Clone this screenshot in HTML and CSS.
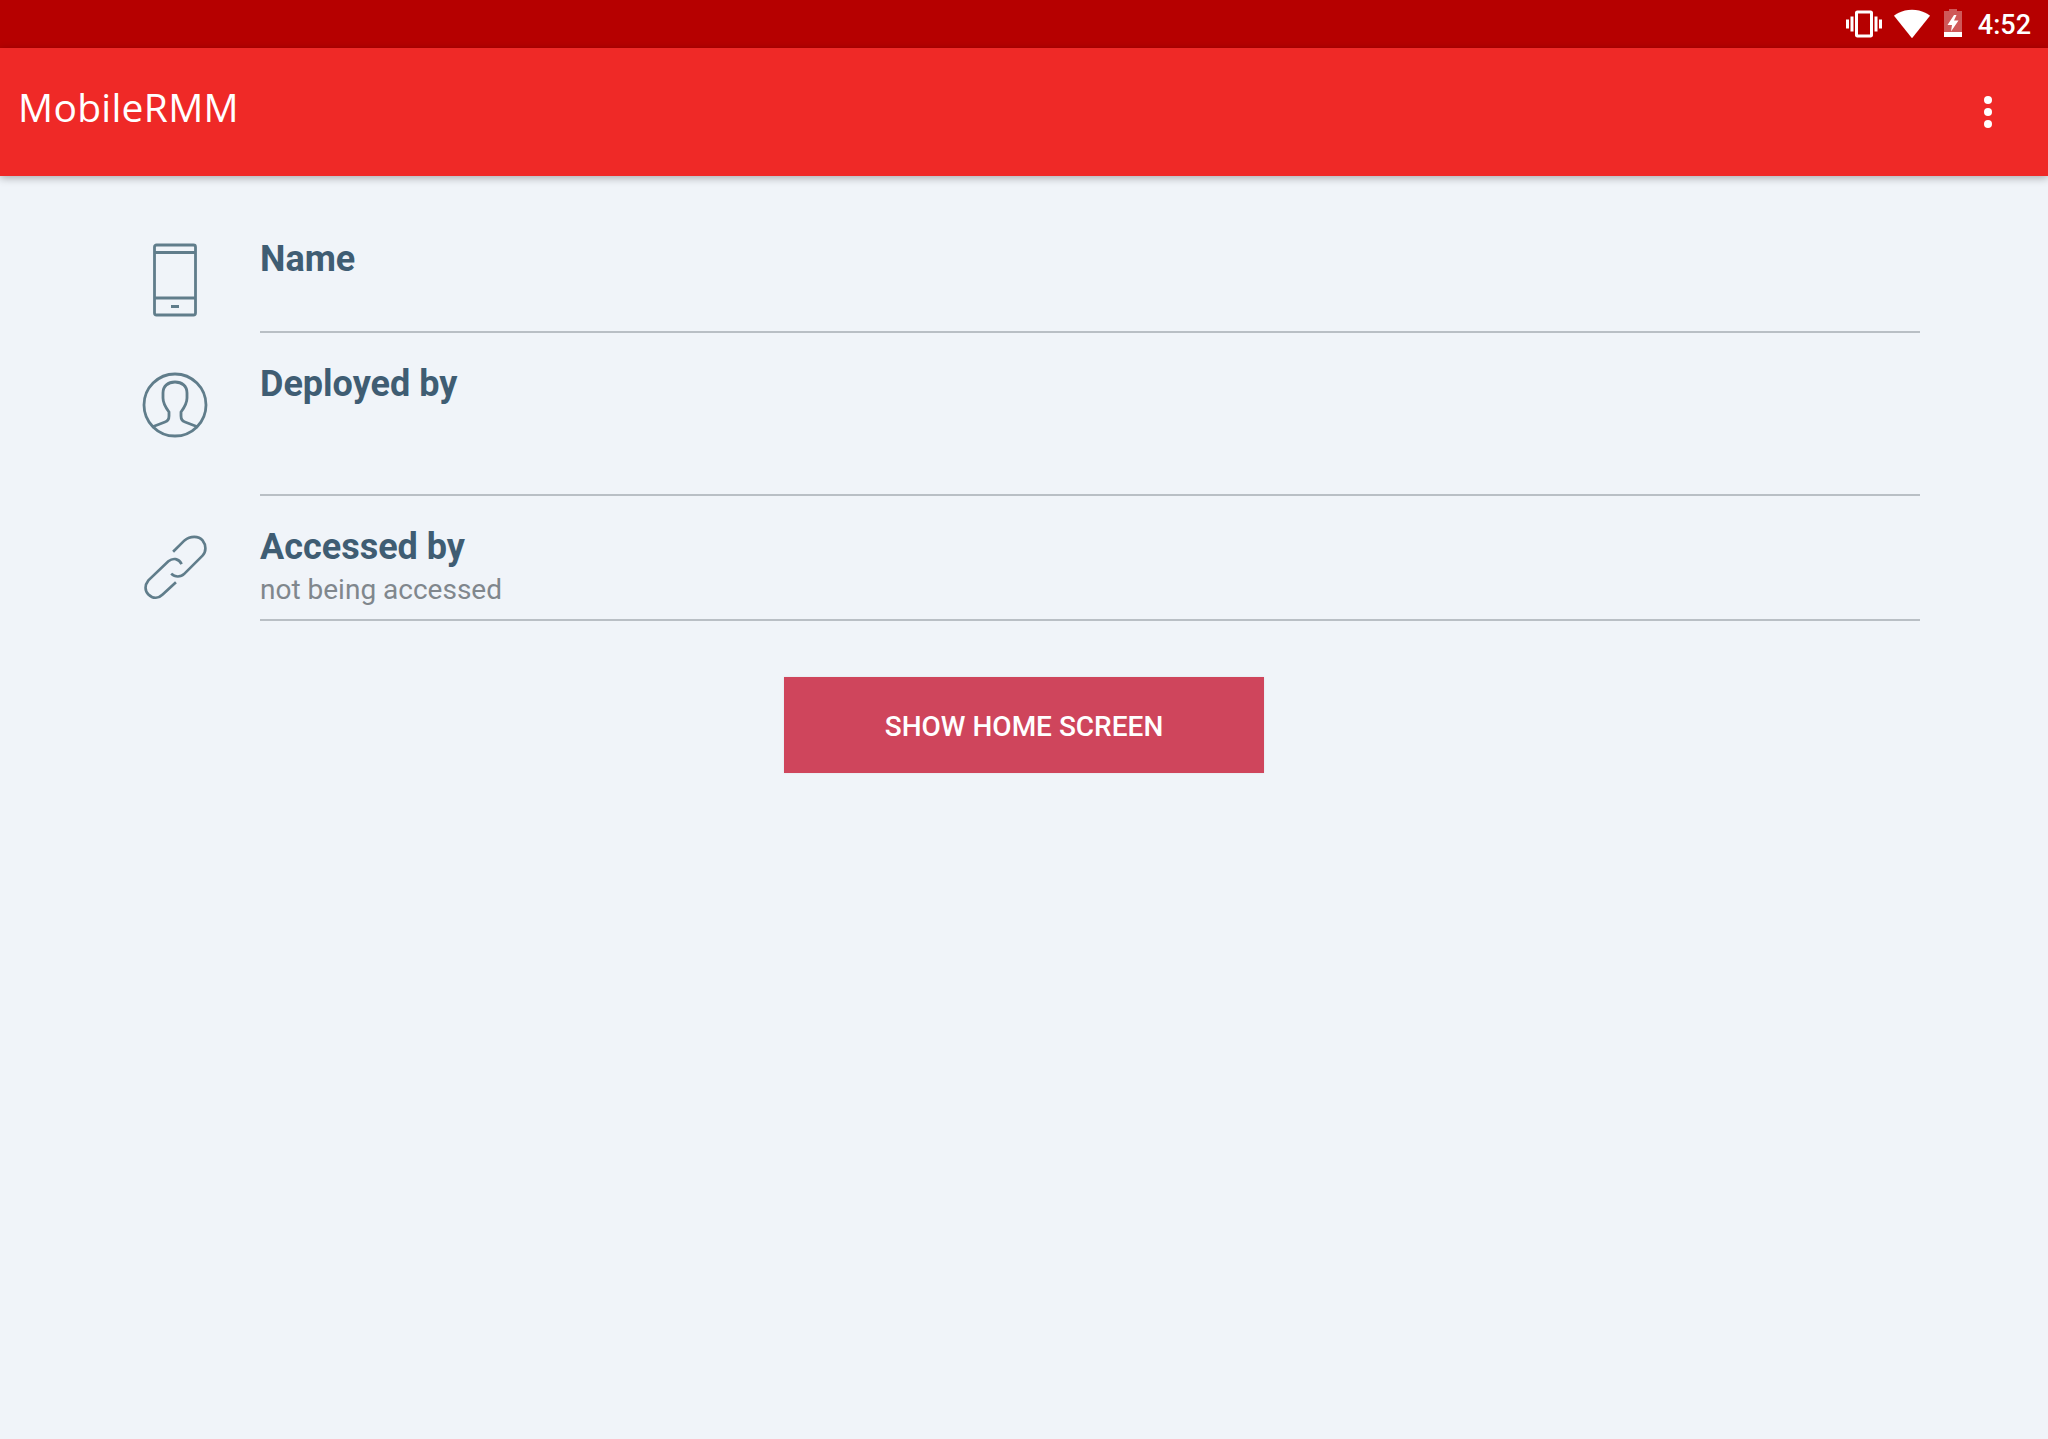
FILE: index.html
```html
<!DOCTYPE html>
<html lang="en">
<head>
    <meta charset="utf-8">
    <meta name="viewport" content="width=device-width, initial-scale=1">
    <title>MobileRMM</title>
    <link rel="stylesheet" href="styles.css">
</head>
<body>
    <div class="status-bar">
        <svg class="status-icon vibrate" viewBox="0 0 24 24"><path d="M0 15h2V9H0v6zm3 2h2V7H3v10zm19-8v6h2V9h-2zm-3 8h2V7h-2v10zM16.500 3h-9C6.670 3 6 3.670 6 4.500v15c0 .83.670 1.500 1.500 1.500h9c.83 0 1.500-.67 1.500-1.500v-15c0-.83-.67-1.500-1.500-1.500zM16 19H8V5h8v14z"/></svg>
        <svg class="status-icon" viewBox="0 0 24 24"><path d="M12 21.500L24 6.500C23.500 6.100 18.900 2.500 12 2.500S.5 6.100 0 6.500z"/></svg>
        <svg class="status-icon battery" viewBox="0 0 18 28">
            <path class="battery-empty" d="M5 0h8v2h5v21H0V2h5z"/>
            <path d="M0 23h18v5H0z"/>
            <path d="M10 6L3.500 16h4.500l-1 6.500 7.500-11h-4.500l2.500-5.500z"/>
        </svg>
        <span class="clock">4:52</span>
    </div>

    <header class="toolbar">
        <span class="app-title">MobileRMM</span>
        <div class="menu-dots">
            <span></span>
            <span></span>
            <span></span>
        </div>
    </header>

    <main class="content">
        <div class="row">
            <div class="row-icon">
                <svg viewBox="0 0 80 80">
                    <rect x="19.500" y="5" width="41" height="70" rx="2"/>
                    <path d="M19.500 12.500h41M19.500 58h41M36 66.500h8"/>
                </svg>
            </div>
            <div class="row-text">
                <div class="row-label">Name</div>
                <div class="row-value"></div>
            </div>
        </div>

        <div class="row">
            <div class="row-icon">
                <svg viewBox="0 0 80 80">
                    <circle cx="40" cy="40" r="31"/>
                    <path d="M17 62L30 57C33 56 34 54 34 51L34 47C31 43 28 39 28 33L28 28C28 21 33 17 40 17C47 17 52 21 52 28L52 33C52 39 49 43 46 47L46 51C46 54 47 56 50 57L63 62"/>
                </svg>
            </div>
            <div class="row-text">
                <div class="row-label">Deployed by</div>
                <div class="row-value row-value-tall"></div>
            </div>
        </div>

        <div class="row">
            <div class="row-icon">
                <svg viewBox="0 0 80 80">
                    <g transform="translate(2 1) scale(.95)">
                        <path d="M38 24L50 12C56 7 65 7 69 12C73 17 73 24 69 28L50 47C46 51 40 51 36 47"/>
                        <path d="M47 37C44 31 38 30 33 34L12 54C8 59 8 65 12 69C17 74 23 73 27 69L41 56"/>
                    </g>
                </svg>
            </div>
            <div class="row-text">
                <div class="row-label">Accessed by</div>
                <div class="row-value">not being accessed</div>
            </div>
        </div>

        <div class="actions">
            <button class="btn-home">SHOW HOME SCREEN</button>
        </div>
    </main>
</body>
</html>
```

FILE: styles.css
```css
* {
    margin: 0;
    padding: 0;
    box-sizing: border-box;
}

body {
    font-family: 'Roboto', sans-serif;
    background: #f0f4f9;
    min-height: 100vh;
}

.status-bar {
    height: 48px;
    background: #b60000;
    display: flex;
    align-items: center;
    justify-content: flex-end;
    padding-right: 17px;
    color: #fff;
}

.status-icon {
    width: 36px;
    height: 36px;
    fill: #fff;
    margin-right: 14px;
}

.status-icon.vibrate {
    margin-right: 12px;
}

.status-icon.battery {
    width: 18px;
    height: 28px;
    margin: 0 16px 2px 0;
}

.battery-empty {
    opacity: 0.35;
}

.clock {
    font-size: 27px;
    font-weight: 500;
    padding-top: 2px;
}

.toolbar {
    height: 128px;
    background: #ef2927;
    color: #fff;
    display: flex;
    justify-content: space-between;
    padding: 0 56px 0 18px;
    box-shadow: 0 2px 8px rgba(0, 0, 0, 0.3);
    position: relative;
}

.app-title {
    font-family: 'Open Sans', sans-serif;
    font-size: 39px;
    letter-spacing: 0.3px;
    line-height: 118px;
}

.menu-dots {
    display: flex;
    flex-direction: column;
    justify-content: center;
    gap: 4px;
}

.menu-dots span {
    width: 8px;
    height: 8px;
    border-radius: 50%;
    background: #fff;
}

.content {
    padding: 33px 128px 0 135px;
}

.row {
    display: flex;
    gap: 45px;
}

.row-icon {
    width: 80px;
    padding-top: 32px;
    flex-shrink: 0;
}

.row:first-child .row-icon {
    padding-top: 31px;
}

.row-icon svg {
    display: block;
    width: 80px;
    height: 80px;
    fill: none;
    stroke: #607d8b;
    stroke-width: 2.8;
}

.row-text {
    flex: 1;
    padding: 30px 0 13px;
    border-bottom: 2px solid #b9bfc5;
}

.row:first-child .row-text {
    padding-top: 29px;
}

.row-label {
    font-size: 36px;
    font-weight: 700;
    line-height: 42px;
    color: #3f5d73;
}

.row-value {
    height: 38px;
    font-size: 28px;
    line-height: 44px;
    color: #80878d;
}

.row-value-tall {
    height: 76px;
}

.actions {
    display: flex;
    justify-content: center;
    margin: 56px -128px 0 -135px;
}

.btn-home {
    width: 480px;
    height: 96px;
    padding-top: 2px;
    border: none;
    background: #cf455c;
    color: #fff;
    font-family: 'Roboto', sans-serif;
    font-size: 28px;
    font-weight: 500;
    box-shadow: 0 0 2px rgba(0, 0, 0, 0.08);
}
```
